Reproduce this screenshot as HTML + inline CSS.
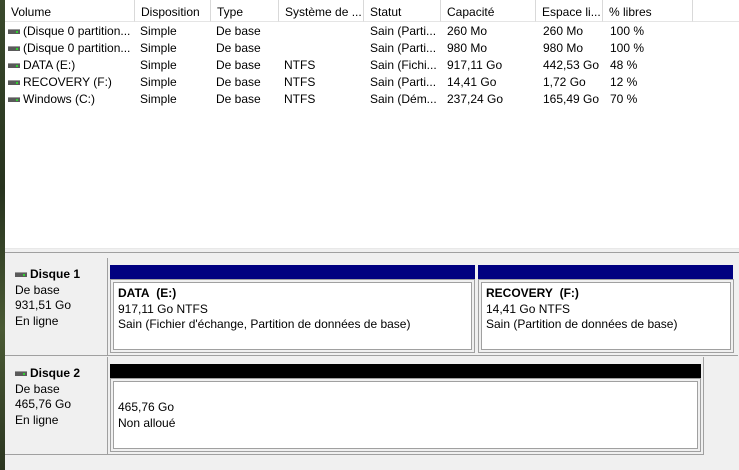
<!DOCTYPE html>
<html><head><meta charset="utf-8"><style>
*{margin:0;padding:0;box-sizing:border-box}
body{width:739px;height:470px;overflow:hidden;background:#f0f0f0;font-family:"Liberation Sans",sans-serif;font-size:12px;color:#000;position:relative}
.a{position:absolute;white-space:nowrap}
#strip{left:0;top:0;width:5px;height:470px;background:linear-gradient(#3a4a2c,#27331e 40%,#4a5a34 70%,#2b3520)}
#list{left:5px;top:0;width:734px;height:248px;background:#fff}
.hd{top:0;height:22px;border-right:1px solid #d9d9d9;border-bottom:1px solid #e5e5e5;padding:5px 0 0 6px;background:#fff}
.c{position:absolute;white-space:nowrap}
.ic{display:inline-block;width:12px;height:5px;background:#5a5a5a;border-top:1px solid #9a9a9a;position:relative;vertical-align:1px;margin-right:3px}
.ic:after{content:"";position:absolute;right:2px;top:1px;width:2px;height:2px;background:#2fd02f}
.lb{left:5px;width:103px;background:#f0f0f0;border-right:1px solid #a0a0a0;border-bottom:1px solid #a0a0a0;padding:9px 0 0 10px;line-height:15.5px}
.bar{background:#000080;height:14px}
.box{background:#fff;border:1px solid #a0a0a0;box-shadow:inset 0 0 0 2px #f0f0f0,inset 0 0 0 3px #a0a0a0;padding:6px 0 0 7px;line-height:15.5px}
</style></head><body>
<div class="a" id="strip"></div>
<div class="a" id="list">
<div class="a hd" style="left:0;width:130px">Volume</div>
<div class="a hd" style="left:130px;width:76px">Disposition</div>
<div class="a hd" style="left:206px;width:68px">Type</div>
<div class="a hd" style="left:274px;width:85px">Système de ...</div>
<div class="a hd" style="left:359px;width:77px">Statut</div>
<div class="a hd" style="left:436px;width:95px">Capacité</div>
<div class="a hd" style="left:531px;width:67px">Espace li...</div>
<div class="a hd" style="left:598px;width:90px">% libres</div>
<div class="a hd" style="left:688px;width:46px;border-right:none"></div>
</div>
<div class="a" style="left:5px;top:248px;width:734px;height:1px;background:#e8e8e8"></div>
<div class="a" style="left:5px;top:252px;width:734px;height:1px;background:#a0a0a0"></div>
<div id="rows">
<div class="c" style="left:8px;top:24px"><span class="ic"></span>(Disque 0 partition...</div>
<div class="c" style="left:8px;top:41px"><span class="ic"></span>(Disque 0 partition...</div>
<div class="c" style="left:8px;top:58px"><span class="ic"></span>DATA (E:)</div>
<div class="c" style="left:8px;top:75px"><span class="ic"></span>RECOVERY (F:)</div>
<div class="c" style="left:8px;top:92px"><span class="ic"></span>Windows (C:)</div>
<div class="c" style="left:140px;top:24px">Simple</div><div class="c" style="left:140px;top:41px">Simple</div><div class="c" style="left:140px;top:58px">Simple</div><div class="c" style="left:140px;top:75px">Simple</div><div class="c" style="left:140px;top:92px">Simple</div>
<div class="c" style="left:216px;top:24px">De base</div><div class="c" style="left:216px;top:41px">De base</div><div class="c" style="left:216px;top:58px">De base</div><div class="c" style="left:216px;top:75px">De base</div><div class="c" style="left:216px;top:92px">De base</div>
<div class="c" style="left:284px;top:58px">NTFS</div><div class="c" style="left:284px;top:75px">NTFS</div><div class="c" style="left:284px;top:92px">NTFS</div>
<div class="c" style="left:370px;top:24px">Sain (Parti...</div><div class="c" style="left:370px;top:41px">Sain (Parti...</div><div class="c" style="left:370px;top:58px">Sain (Fichi...</div><div class="c" style="left:370px;top:75px">Sain (Parti...</div><div class="c" style="left:370px;top:92px">Sain (Dém...</div>
<div class="c" style="left:447px;top:24px">260 Mo</div><div class="c" style="left:447px;top:41px">980 Mo</div><div class="c" style="left:447px;top:58px">917,11 Go</div><div class="c" style="left:447px;top:75px">14,41 Go</div><div class="c" style="left:447px;top:92px">237,24 Go</div>
<div class="c" style="left:543px;top:24px">260 Mo</div><div class="c" style="left:543px;top:41px">980 Mo</div><div class="c" style="left:543px;top:58px">442,53 Go</div><div class="c" style="left:543px;top:75px">1,72 Go</div><div class="c" style="left:543px;top:92px">165,49 Go</div>
<div class="c" style="left:610px;top:24px">100 %</div><div class="c" style="left:610px;top:41px">100 %</div><div class="c" style="left:610px;top:58px">48 %</div><div class="c" style="left:610px;top:75px">12 %</div><div class="c" style="left:610px;top:92px">70 %</div>
</div>

<div class="a lb" style="top:258px;height:98px"><b><span class="ic"></span>Disque 1</b><br>De base<br>931,51 Go<br>En ligne</div>
<div class="a" style="left:108px;top:258px;width:630px;height:98px;border-bottom:1px solid #a0a0a0"></div>
<div class="a bar" style="left:110px;top:265px;width:365px"></div>
<div class="a bar" style="left:478px;top:265px;width:255px"></div>
<div class="a box" style="left:110px;top:279px;width:365px;height:74px"><b>DATA&nbsp; (E:)</b><br>917,11 Go NTFS<br>Sain (Fichier d'échange, Partition de données de base)</div>
<div class="a box" style="left:478px;top:279px;width:256px;height:74px"><b>RECOVERY&nbsp; (F:)</b><br>14,41 Go NTFS<br>Sain (Partition de données de base)</div>

<div class="a lb" style="top:357px;height:98px"><b><span class="ic"></span>Disque 2</b><br>De base<br>465,76 Go<br>En ligne</div>
<div class="a" style="left:108px;top:357px;width:596px;height:98px;border-right:1px solid #a0a0a0;border-bottom:1px solid #a0a0a0"></div>
<div class="a bar" style="left:110px;top:364px;width:591px;background:#000"></div>
<div class="a box" style="left:110px;top:378px;width:591px;height:74px;padding-top:21px">465,76 Go<br>Non alloué</div>
</body></html>
